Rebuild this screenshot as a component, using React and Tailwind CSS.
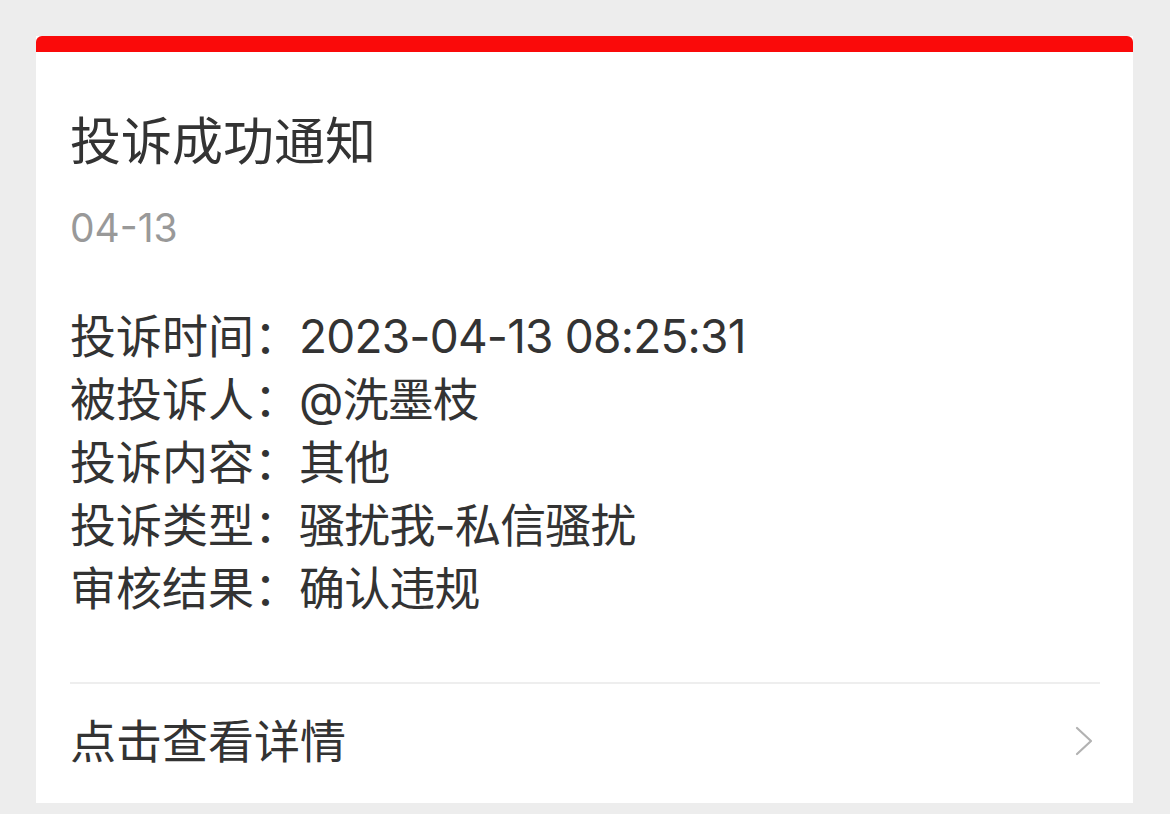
import React from 'react';

const rows = [
    ['投诉时间：', '2023-04-13 08:25:31'],
    ['被投诉人：', '@洗墨枝'],
    ['投诉内容：', '其他'],
    ['投诉类型：', '骚扰我-私信骚扰'],
    ['审核结果：', '确认违规'],
];

function App() {
    return (
        <div className="min-h-screen w-full bg-[#ededed] pt-[36px] pl-[36px]" style={{ fontFamily: 'Inter, "Noto Sans CJK SC", sans-serif' }}>
            <div className="w-[1097px] bg-white">
                {/* red header strip */}
                <div className="h-[16px] rounded-t-[6px] bg-[#fa0a0a]"></div>

                <div className="pl-[34px] pr-[33px]">
                    <h1 className="mt-[60px] text-[51px] leading-[60px] font-normal text-[#333333]">投诉成功通知</h1>
                    <p className="mt-[32px] text-[39px] leading-[48px] text-[#999999]">04-13</p>

                    <div className="mt-[53px] flex flex-col">
                        {rows.map(([label, value]) => (
                            <div key={label} className="flex whitespace-nowrap text-[46px] leading-[63px] text-[#333333]">
                                <span className="w-[229px] shrink-0">{label}</span>
                                <span className="tracking-[-0.8px]">{value}</span>
                            </div>
                        ))}
                    </div>

                    <div className="mt-[62px] h-[2px] bg-[#eeeeee]"></div>

                    <div className="flex items-center justify-between pt-[27px] pb-[32px]">
                        <span className="text-[46px] leading-[60px] text-[#333333]">点击查看详情</span>
                        <svg width="20" height="30" viewBox="0 0 20 30" className="mr-[6px]" fill="none">
                            <path d="M3 2 L17 15 L3 28" stroke="#b2b2b2" strokeWidth="2.2" strokeLinecap="round" strokeLinejoin="round" />
                        </svg>
                    </div>
                </div>
            </div>
        </div>
    );
}

export default App;
